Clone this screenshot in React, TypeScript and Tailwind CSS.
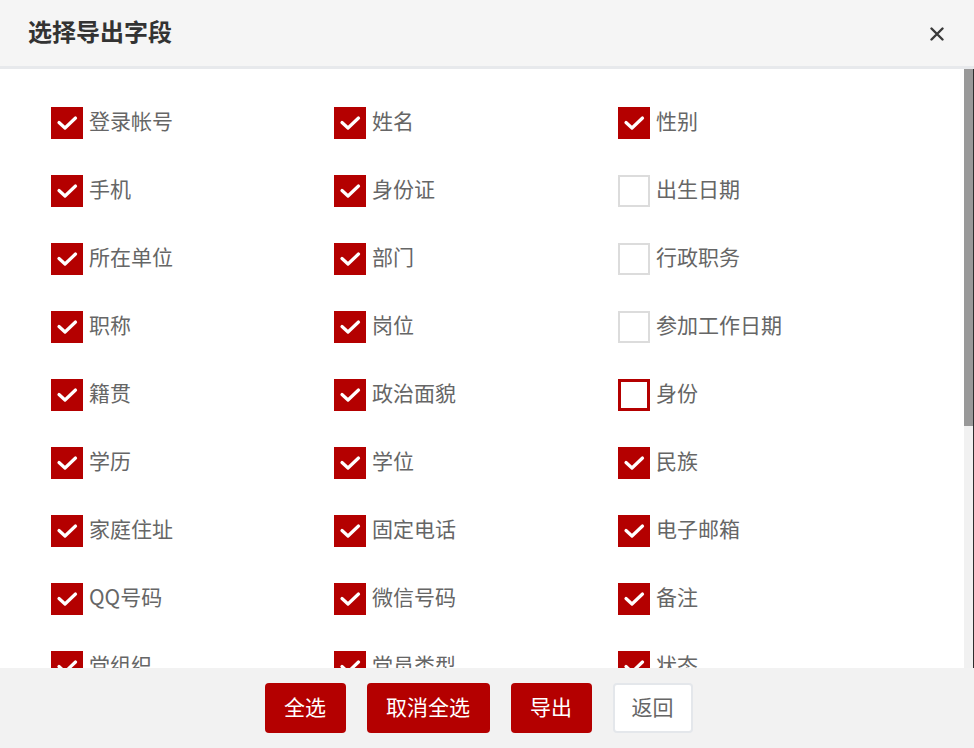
import React from 'react';

// --- TYPES ---
type Field = {
  label: string;
  checked: boolean;
  focused?: boolean;
};

const font = { fontFamily: '"Microsoft YaHei", "Noto Sans CJK SC", "Noto Sans", sans-serif' };

// 3 columns per row, same order as the dialog
const fields: Field[] = [
  { label: '登录帐号', checked: true },
  { label: '姓名', checked: true },
  { label: '性别', checked: true },
  { label: '手机', checked: true },
  { label: '身份证', checked: true },
  { label: '出生日期', checked: false },
  { label: '所在单位', checked: true },
  { label: '部门', checked: true },
  { label: '行政职务', checked: false },
  { label: '职称', checked: true },
  { label: '岗位', checked: true },
  { label: '参加工作日期', checked: false },
  { label: '籍贯', checked: true },
  { label: '政治面貌', checked: true },
  { label: '身份', checked: false, focused: true },
  { label: '学历', checked: true },
  { label: '学位', checked: true },
  { label: '民族', checked: true },
  { label: '家庭住址', checked: true },
  { label: '固定电话', checked: true },
  { label: '电子邮箱', checked: true },
  { label: 'QQ号码', checked: true },
  { label: '微信号码', checked: true },
  { label: '备注', checked: true },
  { label: '党组织', checked: true },
  { label: '党员类型', checked: true },
  { label: '状态', checked: true },
];

function CheckBox({ checked, focused }: { checked: boolean; focused?: boolean }) {
  if (checked) {
    return (
      <span className="flex h-[32px] w-[32px] shrink-0 items-center justify-center bg-[#b40000]">
        <svg width="22" height="16" viewBox="0 0 22 16" fill="none">
          <path d="M3 7.5 L9 13 L19.5 3" stroke="#fff" strokeWidth="3.2" strokeLinecap="round" strokeLinejoin="round" />
        </svg>
      </span>
    );
  }
  return (
    <span
      className={`block h-[32px] w-[32px] shrink-0 bg-white ${
        focused ? 'border-[3px] border-[#b40000]' : 'border-2 border-[#dcdcdc]'
      }`}
    />
  );
}

export default function App() {
  return (
    <div className="flex h-[748px] w-[974px] flex-col overflow-hidden bg-white" style={font}>
      {/* Header */}
      <div className="flex h-[69px] shrink-0 items-center justify-between border-b-[3px] border-[#e7e9ec] bg-[#f5f5f5] pl-[28px] pr-[30px]">
        <h2 className="pb-[4px] text-[24px] font-bold leading-none text-[#333]">选择导出字段</h2>
        <svg width="14" height="14" viewBox="0 0 14 14" className="mt-[1px]">
          <path d="M1.5 1.5 L12.5 12.5 M12.5 1.5 L1.5 12.5" stroke="#3a3a3a" strokeWidth="2.4" strokeLinecap="round" />
        </svg>
      </div>

      {/* Body + scrollbar */}
      <div className="flex min-h-0 flex-1">
        <div className="min-w-0 flex-1 overflow-hidden pl-[51px] pt-[38px]">
          <div className="grid grid-cols-[283px_284px_1fr] gap-y-[36px]">
            {fields.map((f, i) => (
              <label key={i} className="flex h-[32px] items-center gap-[6px]">
                <CheckBox checked={f.checked} focused={f.focused} />
                <span className="pb-[6px] text-[21px] leading-none text-[#666]">{f.label}</span>
              </label>
            ))}
          </div>
        </div>
        <div className="w-[10px] shrink-0 border-r border-[#2e2e2e] bg-[#f1f1f1]">
          <div className="h-[357px] bg-[#999]" />
        </div>
      </div>

      {/* Footer */}
      <div className="flex h-[80px] shrink-0 items-center justify-center gap-[21px] bg-[#f2f2f2] pr-[17px]">
        <button className="h-[50px] w-[81px] rounded-[4px] bg-[#b40000] pb-[3px] text-[21px] text-white">全选</button>
        <button className="h-[50px] w-[123px] rounded-[4px] bg-[#b40000] pb-[3px] text-[21px] text-white">取消全选</button>
        <button className="h-[50px] w-[81px] rounded-[4px] bg-[#b40000] pb-[3px] text-[21px] text-white">导出</button>
        <button className="h-[50px] w-[80px] rounded-[4px] border-2 border-[#e4e7eb] bg-white pb-[3px] text-[21px] text-[#666]">返回</button>
      </div>
    </div>
  );
}
